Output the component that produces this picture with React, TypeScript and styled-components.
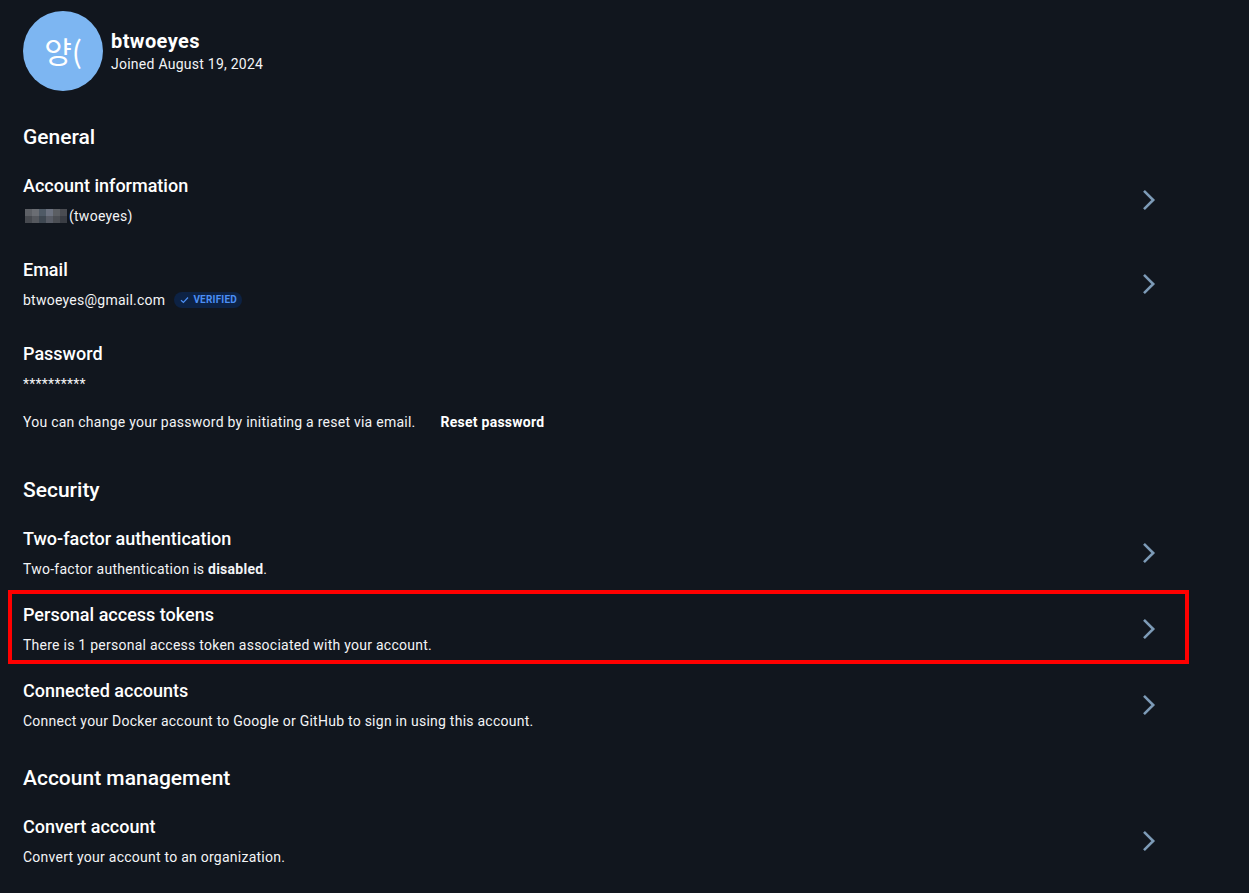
import React from 'react';
import styled, { createGlobalStyle } from 'styled-components';

const GlobalStyle = createGlobalStyle`
  html, body {
    margin: 0;
    padding: 0;
    background: #11161e;
  }
  body {
    font-family: Roboto, "Noto Sans", "Noto Sans CJK KR", sans-serif;
    color: #f3f4f6;
    -webkit-font-smoothing: antialiased;
  }
`;

const Page = styled.div`
  min-height: 893px;
  padding: 11px 0 0 23px;
  box-sizing: border-box;
`;

const Content = styled.div`
  width: 1150px;
  display: flex;
  flex-direction: column;
`;

const Header = styled.div`
  display: flex;
  align-items: center;
  gap: 8px;
`;

const Avatar = styled.div`
  width: 80px;
  height: 80px;
  border-radius: 50%;
  background: #7db6f2;
  color: #ffffff;
  display: flex;
  align-items: center;
  justify-content: center;
  font-family: "Noto Sans CJK KR", Roboto, sans-serif;
  font-size: 30px;
  padding-bottom: 2px;
  box-sizing: border-box;
`;

const UserText = styled.div`
  display: flex;
  flex-direction: column;
  gap: 1px;
`;

const UserName = styled.div`
  font-size: 20px;
  line-height: 24px;
  font-weight: 700;
  letter-spacing: 0.4px;
  color: #ffffff;
`;

const Joined = styled.div`
  font-size: 14px;
  line-height: 20px;
  letter-spacing: 0.25px;
  color: #f3f4f6;
`;

const Section = styled.section<{ $top: number }>`
  margin-top: ${(p) => p.$top}px;
  display: flex;
  flex-direction: column;
`;

const SectionTitle = styled.h2`
  margin: 0 0 23px;
  font-size: 21px;
  line-height: 28px;
  font-weight: 500;
  color: #ffffff;
`;

const RowList = styled.div<{ $gap: number }>`
  display: flex;
  flex-direction: column;
  gap: ${(p) => p.$gap}px;
`;

const Row = styled.div<{ $marked?: boolean }>`
  position: relative;
  display: flex;
  align-items: center;
  justify-content: space-between;

  ${(p) =>
    p.$marked &&
    `
    &::after {
      content: '';
      position: absolute;
      top: -13px;
      bottom: -9px;
      left: -15px;
      right: -16px;
      border: 4px solid #ff0000;
      pointer-events: none;
    }
  `}
`;

const RowBody = styled.div`
  display: flex;
  flex-direction: column;
`;

const RowTitle = styled.div`
  font-size: 18px;
  line-height: 24px;
  font-weight: 500;
  color: #ffffff;
  margin-bottom: 8px;
`;

const RowText = styled.div`
  font-size: 14px;
  line-height: 20px;
  letter-spacing: 0.25px;
  color: #f3f4f6;
  display: flex;
  align-items: center;

  b {
    font-weight: 700;
  }
`;

const Mosaic = styled.span`
  display: inline-grid;
  grid-template-columns: repeat(6, 7px);
  grid-template-rows: repeat(2, 7px);
  margin: 0 2px 0 2px;
`;

const Pixel = styled.span<{ $c: string }>`
  background: ${(p) => p.$c};
`;

const Badge = styled.span`
  display: inline-flex;
  align-items: center;
  gap: 4px;
  margin-left: 9px;
  padding: 0 5px 0 6px;
  height: 16px;
  border-radius: 8px;
  background: #0d2244;
  color: #4c8ff5;
  font-size: 10px;
  font-weight: 700;
  letter-spacing: 0.2px;
`;

const ResetLine = styled.div`
  display: flex;
  align-items: center;
  gap: 9px;
  margin-top: 10px;
  font-size: 14px;
  line-height: 20px;
  letter-spacing: 0.25px;
  color: #f3f4f6;
`;

const ResetButton = styled.button`
  background: transparent;
  border: none;
  padding: 8px 16px;
  font-family: inherit;
  font-size: 14px;
  line-height: 20px;
  font-weight: 700;
  letter-spacing: 0.25px;
  color: #ffffff;
  cursor: pointer;
`;

const Stars = styled.div`
  font-size: 14px;
  line-height: 20px;
  letter-spacing: 0.25px;
  color: #f3f4f6;
`;

const ChevronSvg = styled.svg`
  flex: none;
  margin-right: 14px;
`;

const Chevron = () => (
  <ChevronSvg width="20" height="24" viewBox="0 0 20 24" fill="none">
    <polyline points="5,2.8 14.2,12 5,21.2" stroke="#7d9bb7" strokeWidth="2.6" strokeLinejoin="miter" />
  </ChevronSvg>
);

const pixels = ['#5d6066', '#6a6d73', '#4f5a66', '#6c7280', '#5b5e63', '#4a4c52', '#474a50', '#55585e', '#3f4852', '#585c66', '#4b4e54', '#3a3d44'];

interface SettingRowProps {
  title: string;
  marked?: boolean;
  children: React.ReactNode;
}

const SettingRow: React.FC<SettingRowProps> = ({ title, marked, children }) => (
  <Row $marked={marked}>
    <RowBody>
      <RowTitle>{title}</RowTitle>
      <RowText>{children}</RowText>
    </RowBody>
    <Chevron />
  </Row>
);

export default function App() {
  return (
    <Page>
      <GlobalStyle />
      <Content>
        <Header>
          <Avatar>양(</Avatar>
          <UserText>
            <UserName>btwoeyes</UserName>
            <Joined>Joined August 19, 2024</Joined>
          </UserText>
        </Header>

        <Section $top={32}>
          <SectionTitle>General</SectionTitle>
          <RowList $gap={32}>
            <SettingRow title="Account information">
              <Mosaic>
                {pixels.map((c, i) => (
                  <Pixel key={i} $c={c} />
                ))}
              </Mosaic>
              (twoeyes)
            </SettingRow>
            <SettingRow title="Email">
              btwoeyes@gmail.com
              <Badge>
                <svg width="9" height="8" viewBox="0 0 9 8" fill="none">
                  <polyline points="1,4.2 3.4,6.5 8,1.5" stroke="#4c8ff5" strokeWidth="1.2" />
                </svg>
                VERIFIED
              </Badge>
            </SettingRow>
            <Row>
              <RowBody>
                <RowTitle>Password</RowTitle>
                <Stars>**********</Stars>
                <ResetLine>
                  You can change your password by initiating a reset via email.
                  <ResetButton>Reset password</ResetButton>
                </ResetLine>
              </RowBody>
            </Row>
          </RowList>
        </Section>

        <Section $top={36}>
          <SectionTitle>Security</SectionTitle>
          <RowList $gap={24}>
            <SettingRow title="Two-factor authentication">
              Two-factor authentication is&nbsp;<b>disabled</b>.
            </SettingRow>
            <SettingRow title="Personal access tokens" marked>
              There is 1 personal access token associated with your account.
            </SettingRow>
            <SettingRow title="Connected accounts">
              Connect your Docker account to Google or GitHub to sign in using this account.
            </SettingRow>
          </RowList>
        </Section>

        <Section $top={33}>
          <SectionTitle>Account management</SectionTitle>
          <RowList $gap={24}>
            <SettingRow title="Convert account">Convert your account to an organization.</SettingRow>
          </RowList>
        </Section>
      </Content>
    </Page>
  );
}
